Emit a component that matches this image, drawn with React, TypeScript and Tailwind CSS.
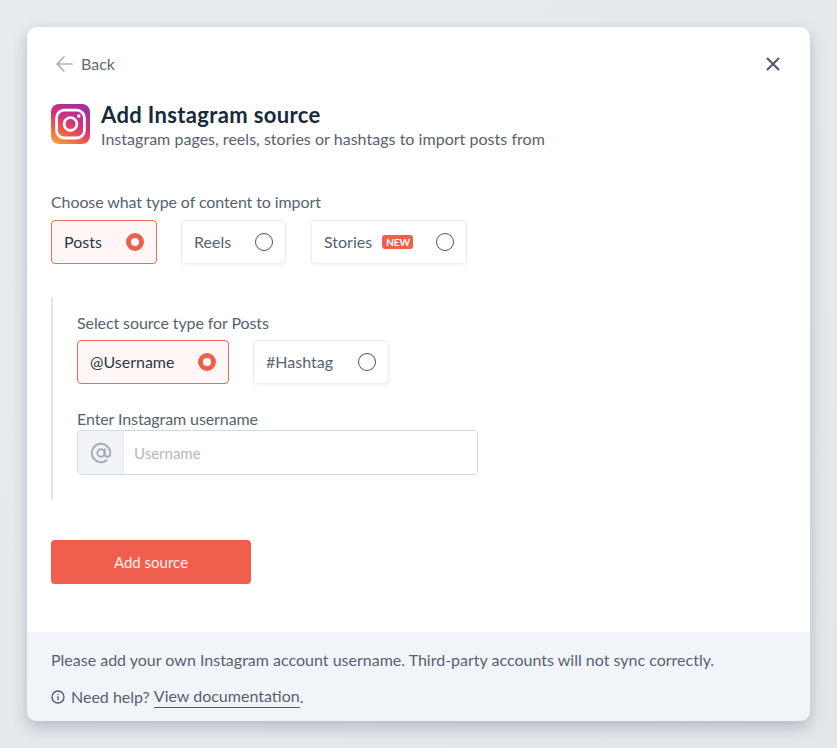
import React from 'react';

function Radio({ on }: { on: boolean }) {
  if (on) {
    return <span className="w-[18px] h-[18px] -mt-[1px] rounded-full border-[5px] border-[#ee5f4c] bg-white shrink-0" />;
  }
  return <span className="w-[18px] h-[18px] -mt-[1px] rounded-full border border-[#4b5563] bg-white shrink-0" />;
}

function Option({
  label,
  on = false,
  badge = false,
  className,
}: {
  label: string;
  on?: boolean;
  badge?: boolean;
  className: string;
}) {
  return (
    <div
      className={`h-11 rounded flex items-center justify-between pl-3 pr-[12px] border ${
        on
          ? 'border-[#ee6a5a] bg-[#fff7f6] text-[#2a3745]'
          : 'border-[#eceef2] bg-white text-[#566270] shadow-[0_1px_3px_rgba(30,50,80,0.08)]'
      } ${className}`}
    >
      <span className="flex items-center gap-[10px]">
        {label}
        {badge && (
          <span className="bg-[#ee5f4c] text-white text-[10px] leading-[14px] font-bold pl-[4px] pr-[3px] rounded-[3px]">
            NEW
          </span>
        )}
      </span>
      <Radio on={on} />
    </div>
  );
}

function InstagramLogo() {
  return (
    <svg width="40" height="40" viewBox="0 0 40 40" className="shrink-0">
      <defs>
        <linearGradient id="ig" x1="0.15" y1="1" x2="0.65" y2="0">
          <stop offset="0" stopColor="#f9a03a" />
          <stop offset="0.3" stopColor="#ee5f45" />
          <stop offset="0.6" stopColor="#d5307c" />
          <stop offset="1" stopColor="#a0329f" />
        </linearGradient>
      </defs>
      <rect width="39" height="40" rx="8" fill="url(#ig)" />
      <rect x="5.6" y="6.2" width="27.8" height="27.8" rx="7.5" fill="none" stroke="#fff" strokeWidth="2.8" />
      <circle cx="19.5" cy="20.1" r="6.4" fill="none" stroke="#fff" strokeWidth="2.8" />
      <circle cx="27.8" cy="12" r="1.8" fill="#fff" />
    </svg>
  );
}

export default function App() {
  return (
    <div
      className="min-h-[748px] bg-gradient-to-br from-[#e8ebef] to-[#e4e7ea] px-[27px] pt-[27px] text-[16px] text-[#566270]"
      style={{ fontFamily: 'Lato, "Liberation Sans", sans-serif' }}
    >
      <div className="w-[783px] h-[694px] bg-white rounded-[10px] overflow-hidden shadow-[0_6px_16px_rgba(50,65,85,0.28)] flex flex-col">
        <div className="flex-1 pl-6 pr-[30px] pt-[26px]">
          <div className="flex items-center justify-between h-[22px]">
            <div className="flex items-center gap-[8px] pl-1 text-[#5e6976]">
              <svg width="18" height="18" viewBox="0 0 18 18" fill="none" stroke="#a9b1bb" strokeWidth="1.7" strokeLinecap="round" strokeLinejoin="round">
                <path d="M17 9H2M9 2L2 9l7 7" />
              </svg>
              Back
            </div>
            <svg width="14" height="14" viewBox="0 0 14 14" fill="none" stroke="#4b5866" strokeWidth="2" strokeLinecap="round">
              <path d="M1.5 1.5l11 11M12.5 1.5l-11 11" />
            </svg>
          </div>

          <div className="flex gap-[10px] mt-[29px] h-[40px]">
            <InstagramLogo />
            <div className="-mt-[1px]">
              <h1 className="text-[22px] leading-[24px] font-bold tracking-[0.35px] text-[#182a3a]">Add Instagram source</h1>
              <p className="leading-[22px] mt-[1px] tracking-[0.03px]">Instagram pages, reels, stories or hashtags to import posts from</p>
            </div>
          </div>

          <p className="mt-[47px] leading-[22px] tracking-[-0.1px]">Choose what type of content to import</p>
          <div className="flex mt-[7px]">
            <Option label="Posts" on className="w-[106px] mr-[24px]" />
            <Option label="Reels" className="w-[105px] mr-[25px]" />
            <Option label="Stories" badge className="w-[156px]" />
          </div>

          <div className="mt-[33px] h-[203px] border-l-[2px] border-[#e1e4e8] pl-[24px] pt-[15px]">
            <p className="leading-[22px] tracking-[-0.1px]">Select source type for Posts</p>
            <div className="flex gap-[24px] mt-[6px]">
              <Option label="@Username" on className="w-[152px]" />
              <Option label="#Hashtag" className="w-[136px]" />
            </div>
            <p className="mt-[24px] leading-[22px] tracking-[-0.1px]">Enter Instagram username</p>
            <div className="flex w-[401px] h-[45px] rounded border border-[#d5d9df] overflow-hidden">
              <div className="w-[46px] bg-[#f1f3f7] border-r border-[#e3e6ea] flex items-center justify-center">
                <svg width="22" height="22" viewBox="0 0 24 24" fill="none" stroke="#a5adb6" strokeWidth="2.2" strokeLinecap="round" strokeLinejoin="round">
                  <circle cx="12" cy="12" r="4" />
                  <path d="M16 8v5a3 3 0 0 0 6 0v-1a10 10 0 1 0-4 8" />
                </svg>
              </div>
              <div className="flex-1 bg-white flex items-center pl-[10px] pt-[1px] text-[15px] text-[#b3b9c1]">Username</div>
            </div>
          </div>

          <button
            type="button"
            className="mt-[40px] w-[200px] h-11 rounded bg-[#f05f4e] text-white/90 text-[15px]"
          >
            Add source
          </button>
        </div>

        <div className="h-[89px] bg-[#f1f4f9] pl-6 pt-[17px]">
          <p className="leading-[22px]">Please add your own Instagram account username. Third-party accounts will not sync correctly.</p>
          <p className="flex items-center mt-[14px] leading-[22px]">
            <svg width="14" height="14" viewBox="0 0 14 14" fill="none" stroke="#4b5866" strokeWidth="1.3" strokeLinecap="round" className="mr-[6px]">
              <circle cx="7" cy="7" r="6" />
              <path d="M7 6.4v3.4M7 4.2v.1" />
            </svg>
            Need help?&nbsp;
            <span className="border-b border-[#4b5866]">View documentation</span>.
          </p>
        </div>
      </div>
    </div>
  );
}
